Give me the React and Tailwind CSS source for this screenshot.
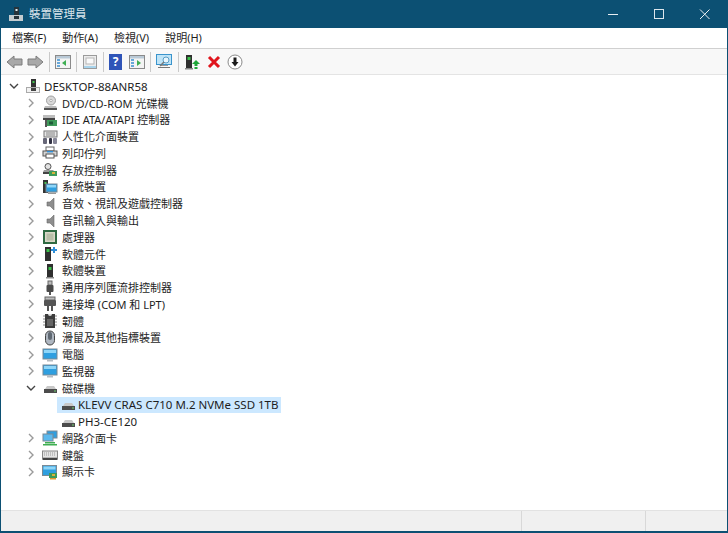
import React from "react";

const F = "font-['Noto_Sans','Noto_Sans_CJK_TC',sans-serif]";

const Chevron = ({ open }) => (
  <svg width="10" height="10" viewBox="0 0 10 10" className="shrink-0">
    <path d={open ? "M1 3l4 4 4-4" : "M3 1l4 4-4 4"} fill="none" stroke={open ? "#444" : "#9a9a9a"} strokeWidth="1.4" />
  </svg>
);

const Svg = ({ children, w = 16 }) => (
  <svg width={w} height="16" viewBox="0 0 16 16" className="shrink-0">
    {children}
  </svg>
);

const Tower = ({ dot = "#3bc24a" }) => (
  <>
    <rect x="5" y="1" width="6" height="13" fill="#2f2f2f" />
    <rect x="6.5" y="4" width="3" height="3" fill={dot} />
    <rect x="4" y="14" width="8" height="1.5" fill="#8a8a8a" />
  </>
);

const Drive = () => (
  <>
    <path d="M3 9l2-3h7l2 3z" fill="#c8c8c8" />
    <rect x="2" y="9" width="13" height="4" fill="#4c4c4c" />
    <rect x="12" y="10.5" width="2" height="1" fill="#6fd06f" />
  </>
);

const Monitor = () => (
  <>
    <rect x="1" y="2" width="14" height="10" fill="#2f9fe0" stroke="#7a8a96" />
    <rect x="2" y="3" width="12" height="3" fill="#8fd6f8" />
    <rect x="5" y="12.5" width="6" height="2" fill="#b5bcc2" />
  </>
);

const Speaker = () => (
  <path d="M5 6h3l4-4v12l-4-4H5z" fill="#8e8e8e" stroke="#6a6a6a" strokeWidth=".6" />
);

const Board = () => (
  <>
    <rect x="7" y="9" width="8" height="5" fill="#3f9a5a" />
    <rect x="10" y="10" width="3" height="2" fill="#d8b23c" />
  </>
);

const icons = {
  computer: (
    <Svg>
      <rect x="6" y="1" width="5" height="9" fill="#333" />
      <rect x="7.5" y="3" width="2" height="2" fill="#43c24e" />
      <rect x="1" y="9" width="14" height="6" fill="#a9a9a9" />
      <rect x="2" y="10" width="12" height="4" fill="#f2f2f2" />
      <rect x="6" y="10" width="5" height="3" fill="#444" />
    </Svg>
  ),
  dvd: (
    <Svg>
      <circle cx="9" cy="5.5" r="4.5" fill="#d9d9d9" stroke="#a0a0a0" />
      <circle cx="9" cy="5.5" r="1.2" fill="#fff" stroke="#888" strokeWidth=".6" />
      <path d="M3 11h11l1 2H2z" fill="#bdbdbd" />
      <rect x="2" y="13" width="13" height="2" fill="#555" />
    </Svg>
  ),
  ide: (
    <Svg>
      <rect x="1" y="3" width="12" height="3" fill="#bdbdbd" />
      <rect x="1" y="6" width="12" height="2" fill="#444" />
      <rect x="4" y="8" width="11" height="6" fill="#3f9a5a" />
      <rect x="7" y="9.5" width="4" height="3" fill="#1f5c38" />
      <rect x="3" y="8" width="2" height="7" fill="#555" />
    </Svg>
  ),
  hid: (
    <Svg>
      <rect x="2" y="2" width="13" height="6" fill="#e6e6e6" stroke="#777" />
      <path d="M4 4h9M4 6h9" stroke="#888" />
      <rect x="1" y="9" width="4" height="6" rx="1" fill="#667" />
      <rect x="7" y="9" width="3" height="6" rx="1" fill="#334" />
      <rect x="11" y="9" width="4" height="6" rx="1" fill="#889" />
    </Svg>
  ),
  printer: (
    <Svg>
      <rect x="4" y="2" width="8" height="4" fill="#fff" stroke="#666" />
      <rect x="1" y="6" width="14" height="5" fill="#d5d5d5" stroke="#555" />
      <rect x="4" y="9" width="8" height="4" fill="#fff" stroke="#555" />
      <rect x="5" y="6" width="6" height="1.4" fill="#2f8fd8" />
    </Svg>
  ),
  storage: (
    <Svg>
      <circle cx="6" cy="4.5" r="3" fill="#e2e2e2" stroke="#555" />
      <path d="M2 8h9l2 2H1z" fill="#9a9a9a" />
      <rect x="1" y="10" width="7" height="2" fill="#444" />
      <Board />
    </Svg>
  ),
  system: (
    <Svg>
      <rect x="1" y="1" width="5" height="13" fill="#333" />
      <rect x="2.5" y="3" width="2" height="2" fill="#43c24e" />
      <rect x="4" y="5" width="11" height="8" fill="#2f9fe0" stroke="#7a8a96" />
      <rect x="5" y="6" width="9" height="2.5" fill="#8fd6f8" />
      <rect x="6" y="13.5" width="8" height="1.5" fill="#999" />
    </Svg>
  ),
  speaker: (
    <Svg>
      <Speaker />
    </Svg>
  ),
  cpu: (
    <Svg>
      <rect x="1" y="1" width="14" height="14" fill="#2f6a42" />
      <rect x="3" y="3" width="10" height="10" fill="#d8d8c8" />
      <rect x="4.5" y="4.5" width="7" height="7" fill="#b8bfa8" />
    </Svg>
  ),
  softcomp: (
    <Svg>
      <rect x="3" y="1" width="6" height="14" fill="#2f2f2f" />
      <rect x="4.5" y="3" width="3" height="3" fill="#3bc24a" />
      <path d="M12 1v6M9 4h6" stroke="#2f8fd8" strokeWidth="2" />
    </Svg>
  ),
  softdev: (
    <Svg>
      <Tower />
    </Svg>
  ),
  usb: (
    <Svg>
      <rect x="6" y="1" width="4" height="4" fill="#bbb" stroke="#666" />
      <rect x="4.5" y="5" width="7" height="7" rx="1" fill="#4a4a4a" />
      <rect x="7" y="12" width="2" height="3" fill="#555" />
    </Svg>
  ),
  port: (
    <Svg>
      <rect x="3" y="1" width="10" height="3" fill="#bbb" stroke="#666" />
      <rect x="2" y="4" width="12" height="6" rx="1" fill="#555" />
      <path d="M5 10h2v5H5zM9 10h2v5H9z" fill="#555" />
    </Svg>
  ),
  firmware: (
    <Svg>
      <rect x="3" y="1" width="10" height="14" fill="#3c3c3c" />
      <path d="M1 3h2M1 6h2M1 9h2M1 12h2M13 3h2M13 6h2M13 9h2M13 12h2" stroke="#888" />
      <path d="M6 1a2 2 0 0 0 4 0z" fill="#ddd" />
      <rect x="5" y="6" width="6" height="7" fill="#666" />
    </Svg>
  ),
  mouse: (
    <Svg>
      <rect x="3.5" y="1" width="9" height="14" rx="4.5" fill="#aeb6c0" stroke="#444" />
      <rect x="6" y="2" width="4" height="8" rx="2" fill="#5f6872" />
    </Svg>
  ),
  monitor: (
    <Svg>
      <Monitor />
    </Svg>
  ),
  drive: (
    <Svg>
      <Drive />
    </Svg>
  ),
  network: (
    <Svg>
      <rect x="5" y="1" width="10" height="7" fill="#2f9fe0" stroke="#7a8a96" />
      <rect x="1" y="4" width="10" height="7" fill="#5cb9ee" stroke="#7a8a96" />
      <rect x="3" y="12" width="10" height="1.5" fill="#3fae52" />
      <rect x="1" y="14" width="14" height="1.5" fill="#3fae52" />
    </Svg>
  ),
  keyboard: (
    <Svg>
      <rect x="0.5" y="4" width="15" height="7" fill="#e4e4e4" stroke="#888" />
      <path d="M2 6h12M2 8h12" stroke="#999" strokeDasharray="1 1" />
      <rect x="0.5" y="11" width="15" height="2" fill="#444" />
    </Svg>
  ),
  display: (
    <Svg>
      <rect x="0.5" y="1.5" width="14" height="10" fill="#2f9fe0" stroke="#7a8a96" />
      <rect x="1.5" y="2.5" width="12" height="3" fill="#8fd6f8" />
      <Board />
      <rect x="8" y="14" width="6" height="1.5" fill="#e09a2e" />
    </Svg>
  ),
};

const rows = [
  ["dvd", "DVD/CD-ROM 光碟機"],
  ["ide", "IDE ATA/ATAPI 控制器"],
  ["hid", "人性化介面裝置"],
  ["printer", "列印佇列"],
  ["storage", "存放控制器"],
  ["system", "系統裝置"],
  ["speaker", "音效、視訊及遊戲控制器"],
  ["speaker", "音訊輸入與輸出"],
  ["cpu", "處理器"],
  ["softcomp", "軟體元件"],
  ["softdev", "軟體裝置"],
  ["usb", "通用序列匯流排控制器"],
  ["port", "連接埠 (COM 和 LPT)"],
  ["firmware", "韌體"],
  ["mouse", "滑鼠及其他指標裝置"],
  ["monitor", "電腦"],
  ["monitor", "監視器"],
];

const rowsAfter = [
  ["network", "網路介面卡"],
  ["keyboard", "鍵盤"],
  ["display", "顯示卡"],
];

const Row = ({ icon, label, open }) => (
  <div className="flex h-[16.78px] items-center pl-[25px]">
    <Chevron open={open} />
    <span className="ml-[6px] mr-[4px] flex">{icons[icon]}</span>
    <span className="whitespace-nowrap">{label}</span>
  </div>
);

const Sep = () => <div className="mx-[5px] h-[20px] w-px bg-[#c9c9c9]" />;

const Arrow = ({ right }) => (
  <svg width="17" height="14" viewBox="0 0 17 14" className={right ? "-scale-x-100" : ""}>
    <path d="M1 7l7-6v3h8v6H8v3z" fill="#a8a8a8" stroke="#7d7d7d" />
  </svg>
);

const WinPane = ({ color, left }) => (
  <svg width="16" height="14" viewBox="0 0 16 14">
    <rect x=".5" y=".5" width="15" height="13" fill="#f4f4f4" stroke="#8a8a8a" />
    <rect x="1" y="1" width="14" height="2.5" fill="#b9c9d6" />
    <path d="M2 5h3M2 8h3M2 11h3" stroke="#3a8fd0" strokeWidth="1.4" />
    <path d={left ? "M11 5v6L7 8z" : "M8 5v6l4-3z"} fill={color} />
  </svg>
);

export default function App() {
  return (
    <div className={`${F} flex h-[533px] w-[728px] flex-col overflow-hidden bg-[#0c5073] text-[#1e1e1e]`}>
      <div className="flex h-[28px] shrink-0 items-center text-[11.5px] text-[#dbe6ec]">
        <span className="ml-[8px] mr-[5px] flex">
          <svg width="16" height="16" viewBox="0 0 16 16">
            <rect x="6" y="1" width="5" height="9" fill="#26343c" />
            <rect x="7.5" y="3" width="2" height="2" fill="#e8f0f4" />
            <rect x="1" y="9" width="14" height="6" fill="#c4ccd0" />
            <rect x="6" y="10" width="5" height="3" fill="#26343c" />
          </svg>
        </span>
        <span>裝置管理員</span>
        <div className="ml-auto flex items-center">
          <svg width="46" height="28" viewBox="0 0 46 28">
            <path d="M18 14.5h10" stroke="#e8eef2" />
          </svg>
          <svg width="46" height="28" viewBox="0 0 46 28">
            <rect x="18.5" y="9.5" width="9" height="9" fill="none" stroke="#dce6ec" />
          </svg>
          <svg width="46" height="28" viewBox="0 0 46 28">
            <path d="M18 9.5l9.5 9.5M27.5 9.5L18 19" stroke="#e8eef2" />
          </svg>
        </div>
      </div>

      <div className="mx-px flex min-h-0 flex-1 flex-col bg-white">
        <div className="flex h-[21px] shrink-0 items-center gap-[16px] border-b border-[#d0d0d0] pl-[11px] text-[11px]">
          <span>檔案(F)</span>
          <span>動作(A)</span>
          <span>檢視(V)</span>
          <span>說明(H)</span>
        </div>

        <div className="flex h-[26px] shrink-0 items-center border-b border-[#e4e4e4] bg-[#f8f8f8] pl-[5px]">
          <span className="flex gap-[4px]">
            <Arrow />
            <Arrow right />
          </span>
          <Sep />
          <WinPane color="#3fae52" left />
          <Sep />
          <svg width="16" height="16" viewBox="0 0 16 16">
            <rect x="1.5" y="1.5" width="13" height="13" fill="#ececec" stroke="#9a9a9a" />
            <rect x="4" y="4" width="8" height="6" fill="#fafafa" stroke="#b5b5b5" />
            <rect x="2" y="12" width="12" height="2" fill="#a8d4ec" />
          </svg>
          <Sep />
          <span className="flex h-[16px] w-[13px] items-center justify-center bg-[#2f54b8] text-[12px] font-bold leading-none text-white">?</span>
          <span className="ml-[7px] flex">
            <WinPane color="#3fae52" />
          </span>
          <Sep />
          <svg width="17" height="16" viewBox="0 0 17 16">
            <rect x=".5" y=".5" width="15" height="10" fill="#bfe4f7" stroke="#3a94cc" />
            <rect x="4" y="11" width="8" height="1" fill="#999" />
            <rect x="2" y="13" width="12" height="1" fill="#777" />
            <circle cx="10" cy="6" r="3" fill="#e8f6fd" stroke="#5a9cc4" />
            <path d="M8 8l-4 4" stroke="#777" strokeWidth="1.4" />
          </svg>
          <Sep />
          <svg width="17" height="16" viewBox="0 0 17 16">
            <rect x="2" y="1" width="6" height="13" fill="#2f2f2f" />
            <rect x="3.5" y="3" width="3" height="3" fill="#3bc24a" />
            <rect x="1" y="14" width="8" height="1.5" fill="#888" />
            <path d="M12 6l4 4h-2.500v2h-3v-2H8z" fill="#1fa83a" />
            <rect x="10.500" y="13" width="3" height="2" fill="#1fa83a" />
          </svg>
          <svg width="16" height="14" viewBox="0 0 14 14" className="ml-[5px]">
            <path d="M2 2l10 10M12 2L2 12" stroke="#e0141c" strokeWidth="3" />
          </svg>
          <svg width="16" height="16" viewBox="0 0 16 16" className="ml-[5px]">
            <circle cx="8" cy="8" r="7" fill="#fff" stroke="#8a8a8a" />
            <path d="M6.500 3.500h3V8h2L8 12.500 4.500 8h2z" fill="#1c1c1c" />
          </svg>
        </div>

        <div className="min-h-0 flex-1 pt-[3px] text-[11px] leading-none">
          <div className="flex h-[16.78px] items-center pl-[8px] text-[11.5px]">
            <Chevron open />
            <span className="ml-[6px] mr-[3px] flex">{icons.computer}</span>
            <span>DESKTOP-88ANR58</span>
          </div>
          {rows.map(([icon, label]) => (
            <Row key={label} icon={icon} label={label} />
          ))}
          <Row icon="drive" label="磁碟機" open />
          <div className="flex h-[16.78px] items-center pl-[56px] text-[11.5px]">
            <div className="flex h-full items-center bg-[#cce8ff] pl-[3px] pr-[3px]">
              <span className="mr-[2px] flex">{icons.drive}</span>
              <span className="whitespace-nowrap">KLEVV CRAS C710 M.2 NVMe SSD 1TB</span>
            </div>
          </div>
          <div className="flex h-[16.78px] items-center pl-[59px] text-[11.5px]">
            <span className="mr-[2px] flex">{icons.drive}</span>
            <span>PH3-CE120</span>
          </div>
          {rowsAfter.map(([icon, label]) => (
            <Row key={label} icon={icon} label={label} />
          ))}
        </div>

        <div className="flex h-[21px] shrink-0 border-t border-[#e2e2e2] bg-[#f0f0f0]">
          <div className="flex-1 border-r border-[#d8d8d8]" />
          <div className="w-[124px] border-r border-[#d8d8d8]" />
          <div className="w-[81px]" />
        </div>
      </div>
      <div className="h-[2px] shrink-0" />
    </div>
  );
}
